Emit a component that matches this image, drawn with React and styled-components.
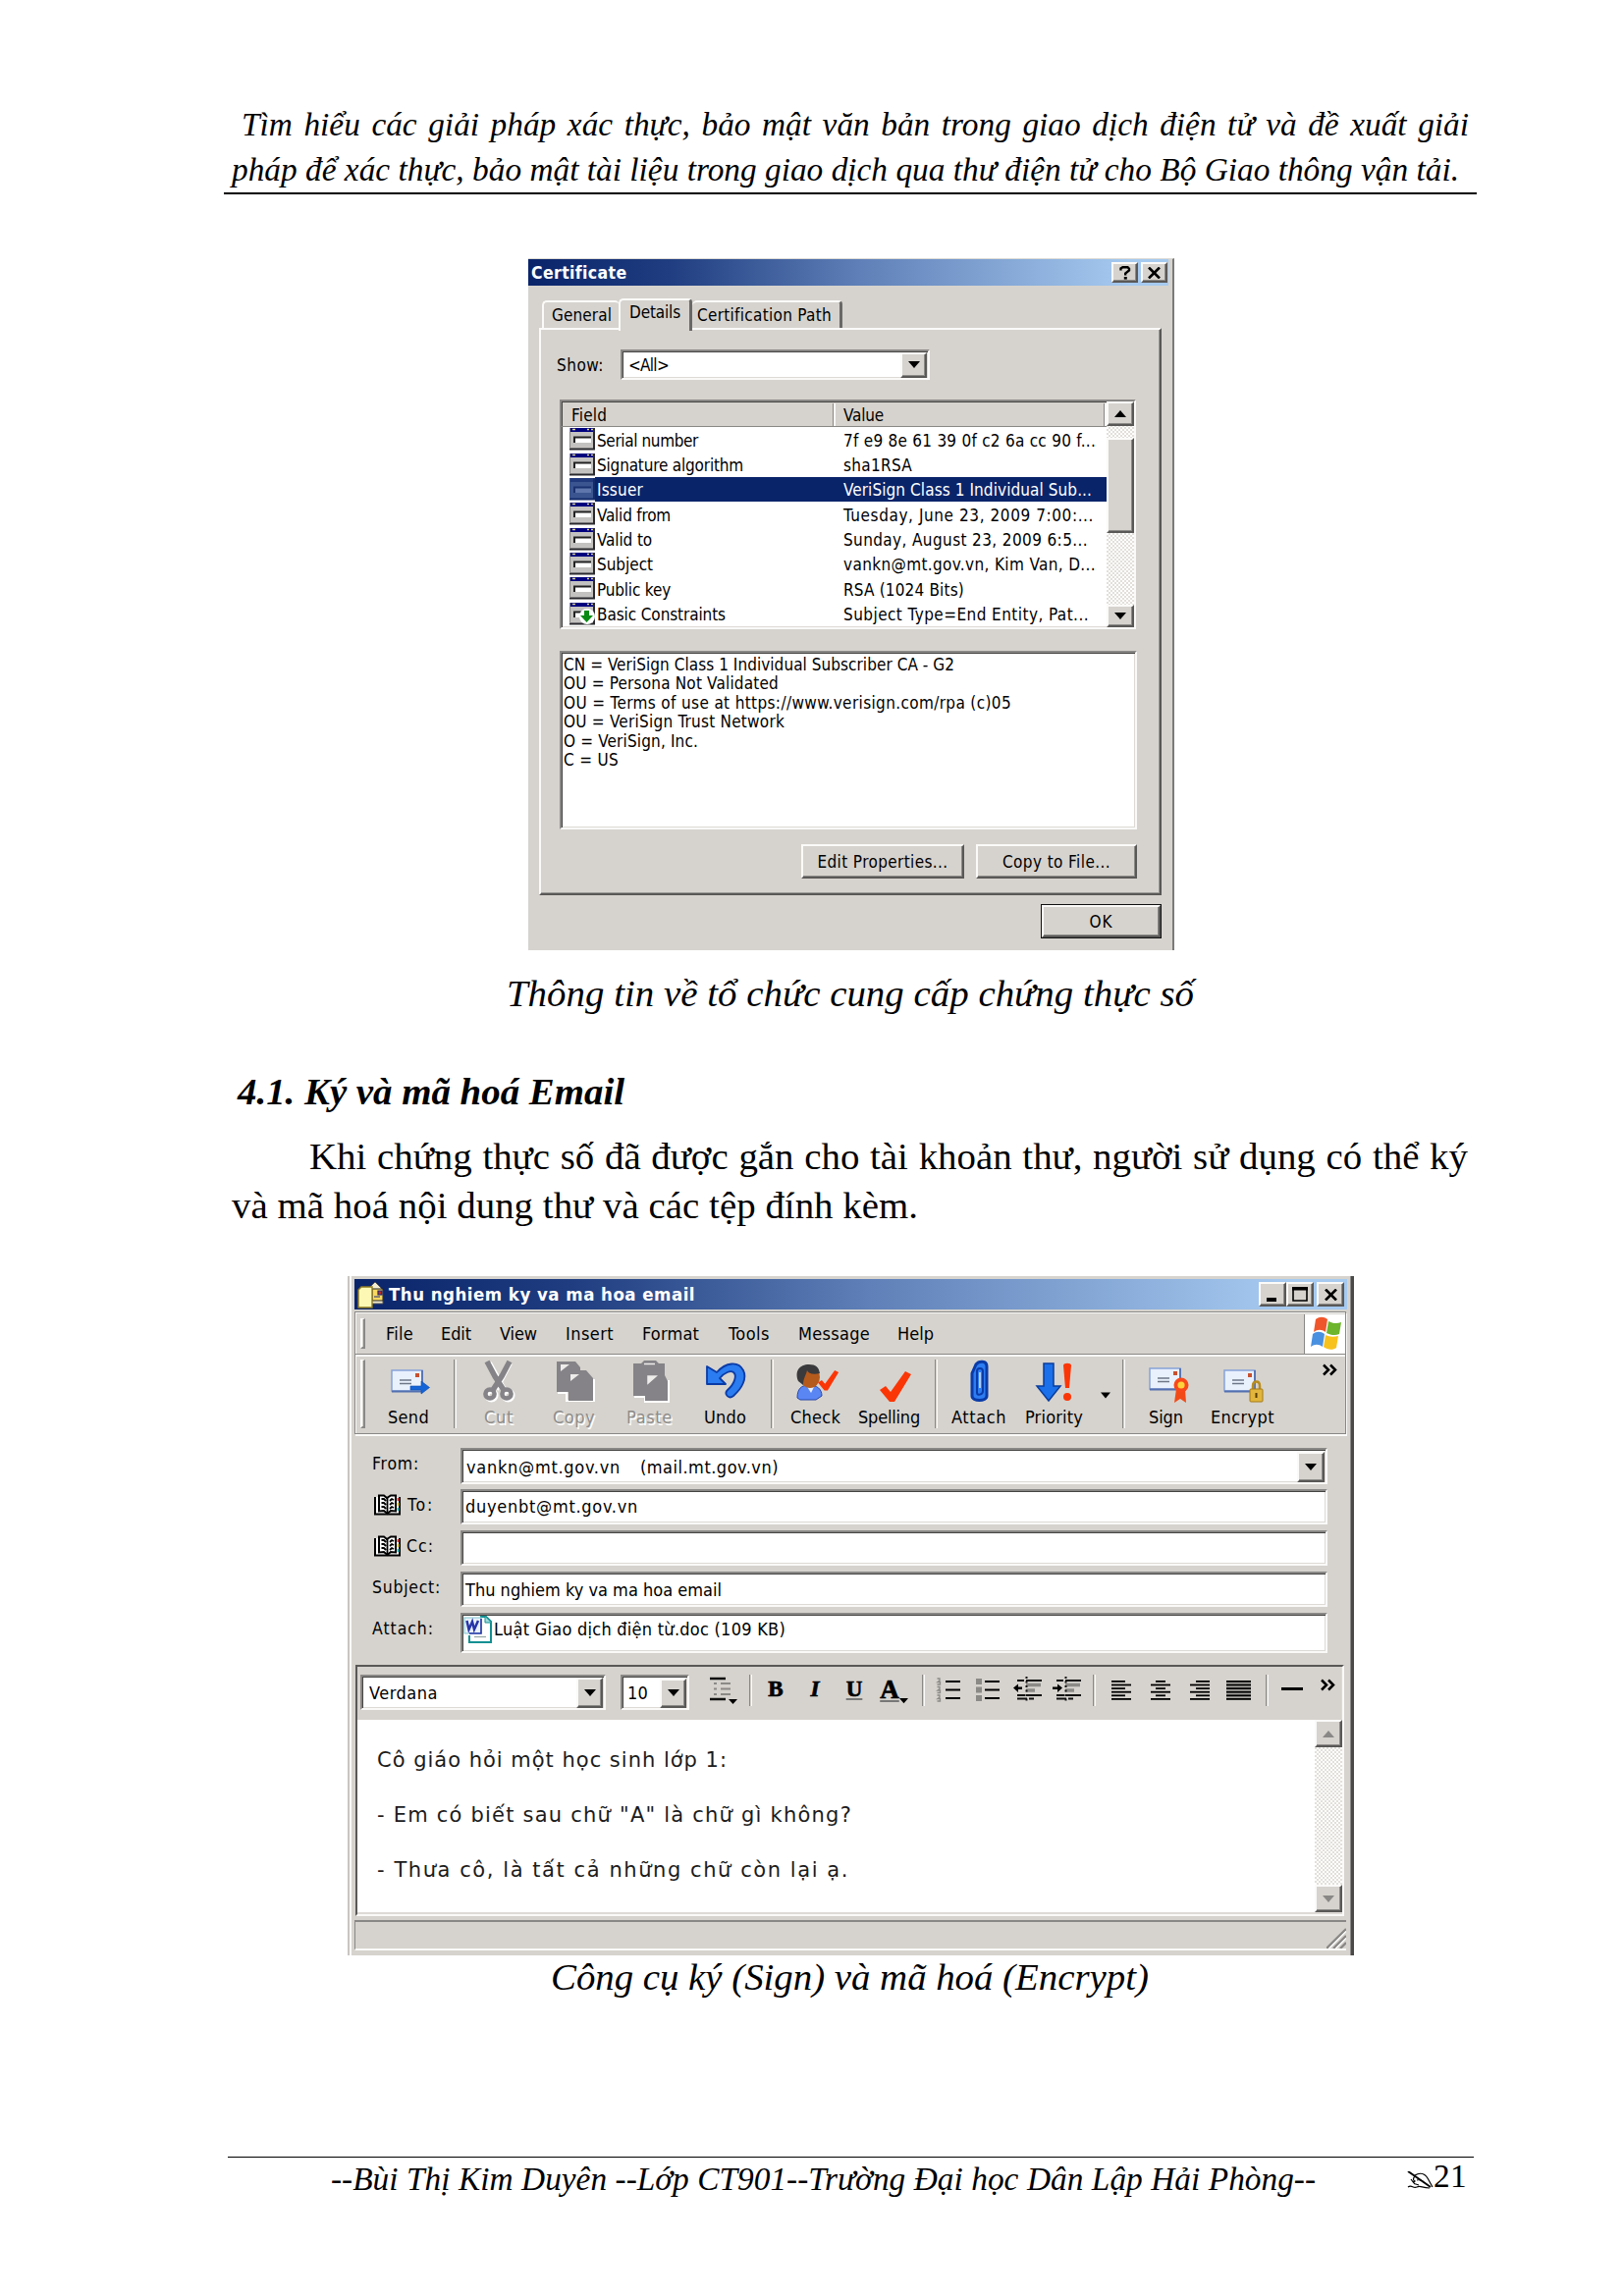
import React, { useLayoutEffect, useRef, useState } from "react";
import styled, { createGlobalStyle, css } from "styled-components";

const face = "#d6d3ce";
const ui = `"DejaVu Sans Condensed", "DejaVu Sans", sans-serif`;
const uiWide = `"DejaVu Sans", sans-serif`;
const serif = `"Liberation Serif", serif`;

const Global = createGlobalStyle`
  * { box-sizing: border-box; }
  body { margin: 0; background: #fff; }
`;

const raised = css`
  background: ${face};
  border: 2px solid;
  border-color: #fbfaf9 #5a5857 #5a5857 #fbfaf9;
  box-shadow: inset -1px -1px 0 #8c8a87;
`;
const sunken = css`
  border: 2px solid;
  border-color: #8a8886 #faf9f8 #faf9f8 #8a8886;
  box-shadow: inset 1px 1px 0 #454443, inset -1px -1px 0 #dddad6;
`;

/* Text set to an exact measure: the spacing is worked out from the natural width. */
const FitBox = styled.span`
  display: block;
  flex: none;
  width: ${(p) => p.$w}px;
  margin-left: ${(p) => p.$ml || 0}px;
  white-space: pre;
`;
function Fit({ w, ml, words, children }) {
  const ref = useRef(null);
  const [space, setSpace] = useState(0);
  useLayoutEffect(() => {
    const el = ref.current;
    const prevL = el.style.letterSpacing;
    const prevW = el.style.wordSpacing;
    el.style.letterSpacing = "0px";
    el.style.wordSpacing = "0px";
    const natural = el.getBoundingClientRect().width;
    el.style.letterSpacing = prevL;
    el.style.wordSpacing = prevW;
    const n = words ? children.split(" ").length - 1 : children.length;
    setSpace((w - natural) / n);
  }, [w, words, children]);
  return (
    <FitBox $w={w} $ml={ml}>
      <span ref={ref} style={words ? { wordSpacing: space } : { letterSpacing: space }}>
        {children}
      </span>
    </FitBox>
  );
}

/* ---------- document ---------- */
const Page = styled.div`
  width: 1654px;
  height: 2339px;
  display: flex;
  flex-direction: column;
  background: #fff;
  color: #000;
  font-family: ${serif};
  overflow: hidden;
`;
const PageHeader = styled.header`
  margin: 104px 150px 0 228px;
  border-bottom: 2px solid #000;
  font-size: 33.33px;
  line-height: 46px;
  font-style: italic;
`;
const DocLine = styled.div`
  margin-top: ${(p) => p.$mt || 0}px;
  padding-left: ${(p) => p.$x}px;
  height: ${(p) => p.$h || 46}px;
  line-height: ${(p) => p.$h || 46}px;
  font-size: 38.89px;
  font-style: ${(p) => (p.$italic ? "italic" : "normal")};
  font-weight: ${(p) => (p.$bold ? 700 : 400)};
`;
const PageFooter = styled.footer`
  display: flex;
  margin: 161px 153px 0 232px;
  border-top: 1px solid #000;
  font-size: 33.33px;
  line-height: 44px;
  height: 46px;
`;
const FooterText = styled.div`
  margin-left: 105px;
  font-style: italic;
`;
const PageNumber = styled.div`
  display: flex;
  margin-left: 93px;
  margin-top: -3px;
  svg { margin-top: 17px; }
`;

/* ---------- shared controls ---------- */
const Dialog = styled.section`
  margin: 65px 0 0 538px;
  width: 658px;
  height: 705px;
  flex: none;
  display: flex;
  flex-direction: column;
  background: ${face};
  border-top: 1px solid #dcdad6;
  border-right: 2px solid #7c7a78;
  font-family: ${ui};
  font-size: 17px;
`;
const TitleBar = styled.div`
  display: flex;
  align-items: center;
  flex: none;
  width: ${(p) => p.$w}px;
  height: ${(p) => p.$h}px;
  margin-bottom: ${(p) => p.$mb}px;
  padding: 0 ${(p) => p.$pr}px 0 3px;
  background: linear-gradient(90deg, #0a246a 0%, #1f3d80 22%, #5f80b8 52%, #a6caf0 94%);
  color: #fff;
  font-size: ${(p) => p.$size}px;
  font-weight: 700;
`;
const CaptionButton = styled.span`
  ${raised}
  display: flex;
  align-items: center;
  justify-content: center;
  width: ${(p) => p.$w || 27}px;
  height: ${(p) => p.$h || 21}px;
  margin-left: ${(p) => (p.$ml === "auto" ? "auto" : (p.$ml || 0) + "px")};
`;
const Sunken = styled.div`
  ${sunken}
  display: flex;
  align-items: ${(p) => p.$align || "center"};
  flex: none;
  width: ${(p) => p.$w}px;
  height: ${(p) => p.$h}px;
  margin: ${(p) => p.$mt || 0}px 0 0 ${(p) => p.$ml || 0}px;
  padding: ${(p) => p.$pt || 0}px 0 ${(p) => p.$pb || 0}px ${(p) => p.$pl || 0}px;
  background: #fff;
`;
const ArrowButton = styled.span`
  ${raised}
  display: flex;
  align-items: center;
  justify-content: center;
  flex: none;
  width: ${(p) => p.$w || 27}px;
  height: ${(p) => p.$h || 27}px;
  margin-top: ${(p) => (p.$bottom ? "auto" : 0)};
  margin-left: ${(p) => (p.$push ? "auto" : 0)};
  margin-right: ${(p) => (p.$push ? 1 : 0)}px;
`;
const ScrollTrack = styled.div`
  display: flex;
  flex-direction: column;
  flex: none;
  width: 28px;
  margin-left: auto;
  align-self: stretch;
  background: repeating-conic-gradient(#fff 0 25%, #e2dfda 0 50%) 0 0 / 4px 4px;
`;
const Thumb = styled.span`
  ${raised}
  height: 97px;
  margin: 12px 0 auto;
`;
const Arrow = ({ up, color = "#000", w = 12 }) => (
  <svg width={w} height="7" viewBox="0 0 12 7">
    <path d={up ? "M0 7L6 0L12 7Z" : "M0 0H12L6 7Z"} fill={color} />
  </svg>
);
const CloseGlyph = () => (
  <svg width="13" height="12" viewBox="0 0 13 12">
    <path d="M1 0.5L12 11.5M12 0.5L1 11.5" stroke="#000" strokeWidth="2.6" />
  </svg>
);

/* ---------- certificate dialog ---------- */
const Tabs = styled.div`
  display: flex;
  align-items: flex-end;
  height: 30px;
  padding-left: 14px;
`;
const Tab = styled.div`
  display: flex;
  align-items: center;
  width: ${(p) => p.$w}px;
  height: ${(p) => (p.$active ? 33 : 28)}px;
  margin-bottom: ${(p) => (p.$active ? -3 : 0)}px;
  padding: 0 0 ${(p) => (p.$active ? 8 : 0)}px ${(p) => p.$pl}px;
  position: relative;
  z-index: ${(p) => (p.$active ? 1 : 0)};
  background: ${face};
  border-top: 2px solid #fbfaf9;
  border-left: ${(p) => (p.$noLeft ? 0 : 2)}px solid #fbfaf9;
  border-right: ${(p) => (p.$edge ? "3px solid #6a6866" : "0")};
  border-radius: 5px 4px 0 0;
`;
const TabPanel = styled.div`
  width: 634px;
  height: 578px;
  flex: none;
  margin-left: 11px;
  border: 2px solid;
  border-color: #fbfaf9 #5a5857 #5a5857 #fbfaf9;
  box-shadow: inset -1px -1px 0 #9a9895;
`;
const ShowRow = styled.div`
  display: flex;
  align-items: center;
  margin-top: 20px;
  padding-left: 16px;
  height: 31px;
`;
const Columns = styled.div`
  width: 555px;
  height: 230px;
  overflow: hidden;
`;
const ColumnHeads = styled.div`
  display: flex;
  height: 26px;
  padding: 4px 0 0 10px;
  line-height: 21px;
  background: ${face};
  border-bottom: 1px solid #8a8886;
  box-shadow: inset 0 1px 0 #454443, inset 1px 0 0 #454443;
`;
const HeadCell = styled.div`
  width: ${(p) => p.$w}px;
  padding-left: ${(p) => p.$pl || 0}px;
  margin-top: -2px;
  padding-top: 2px;
  border-right: 1px solid #8a8886;
  box-shadow: 2px 0 0 #fbfaf9;
`;
const Row = styled.div`
  display: flex;
  align-items: center;
  height: 25.35px;
  padding-left: 8px;
  svg { flex: none; }
`;
const RowBody = styled.div`
  display: flex;
  align-items: center;
  width: 521px;
  height: 25.35px;
  padding: 2px 0 0 2px;
  color: ${(p) => (p.$on ? "#fff" : "#000")};
  background: ${(p) => (p.$on ? "#0a246a" : "transparent")};
`;
const RowName = styled.div`
  width: 251px;
`;
const Details = styled.div`
  line-height: 19.45px;
`;
const ButtonRow = styled.div`
  display: flex;
  margin: ${(p) => p.$mt}px 0 0 ${(p) => p.$ml}px;
  gap: 12px;
`;
const Button = styled.div`
  ${raised}
  display: flex;
  align-items: center;
  justify-content: center;
  width: ${(p) => p.$w}px;
  height: 35px;
  ${(p) => p.$primary && css`outline: 1.5px solid #111; outline-offset: -1.5px; border-width: 3px; `}
`;

const FieldIcon = ({ on, ext }) => (
  <svg width="26" height="23" viewBox="0 0 26 23">
    <rect x="0" y="0" width="26" height="22" fill={on ? "#3a5590" : "#c4c2c0"} />
    <rect x="0" y="0" width="26" height="4" fill={on ? "#20397c" : "#00007e"} />
    {!on && <path d="M3 1.5h3M18 1.5h2M22 1.5h2" stroke="#d8d490" strokeWidth="1.5" />}
    <path d="M25 0V21.5H0" fill="none" stroke={on ? "#152c6a" : "#2a2a2e"} strokeWidth="2" />
    <path d="M0.5 0V21" stroke={on ? "#3a5590" : "#8a8886"} />
    <rect x="5" y="10" width="17" height="5" fill={on ? "#5e76ab" : "#fff"} />
    <path d="M5 15V9.5H22" fill="none" stroke={on ? "#1b3270" : "#222"} strokeWidth="2" />
    {ext && (
      <g>
        <circle cx="18" cy="14" r="8" fill="#fff" />
        <path d="M15 8h5v5h4l-6.500 7l-6.500-7h4z" fill="#0a8a14" />
      </g>
    )}
  </svg>
);

const rows = [
  ["Serial number", 103, "7f e9 8e 61 39 0f c2 6a cc 90 f...", 257],
  ["Signature algorithm", 149, "sha1RSA", 70],
  ["Issuer", 47, "VeriSign Class 1 Individual Sub...", 253],
  ["Valid from", 75, "Tuesday, June 23, 2009 7:00:...", 255],
  ["Valid to", 56, "Sunday, August 23, 2009 6:5...", 249],
  ["Subject", 57, "vankn@mt.gov.vn, Kim Van, D...", 257],
  ["Public key", 75, "RSA (1024 Bits)", 123],
  ["Basic Constraints", 131, "Subject Type=End Entity, Pat...", 250],
];
const details = [
  ["CN = VeriSign Class 1 Individual Subscriber CA - G2", 398],
  ["OU = Persona Not Validated", 219],
  ["OU = Terms of use at https://www.verisign.com/rpa (c)05", 456],
  ["OU = VeriSign Trust Network", 225],
  ["O = VeriSign, Inc.", 137],
  ["C = US", 56],
];

function CertificateDialog() {
  return (
    <Dialog>
      <TitleBar $w={652} $h={27} $mb={13} $pr={1} $size={17.5}>
        <Fit w={97}>Certificate</Fit>
        <CaptionButton $ml="auto">
          <svg width="12" height="14" viewBox="0 0 12 14">
            <path d="M1.500 4.500V2.500L3.500 1.200H8.500L10 2.800V4.500L6.200 7.500V9.500" fill="none" stroke="#000" strokeWidth="2.400" />
            <rect x="4.800" y="11" width="3" height="2.600" />
          </svg>
        </CaptionButton>
        <CaptionButton $ml={3}><CloseGlyph /></CaptionButton>
      </TitleBar>
      <Tabs>
        <Tab $w={78} $pl={8}><Fit w={61}>General</Fit></Tab>
        <Tab $w={75} $pl={9} $active $edge><Fit w={52}>Details</Fit></Tab>
        <Tab $w={153} $pl={5} $edge $noLeft><Fit w={137}>Certification Path</Fit></Tab>
      </Tabs>
      <TabPanel>
        <ShowRow>
          <Fit w={48}>Show:</Fit>
          <Sunken $w={315} $h={31} $ml={17} $pl={6}>
            <Fit w={41}>{"<All>"}</Fit>
            <ArrowButton $push $h={26}><Arrow /></ArrowButton>
          </Sunken>
        </ShowRow>
        <Sunken $w={587} $h={234} $ml={19} $mt={20} $align="stretch">
          <Columns>
            <ColumnHeads>
              <HeadCell $w={267}><Fit w={36}>Field</Fit></HeadCell>
              <HeadCell $w={276} $pl={10}><Fit w={41}>Value</Fit></HeadCell>
            </ColumnHeads>
            {rows.map(([name, nw, value, vw], i) => (
              <Row key={name}>
                <FieldIcon on={i === 2} ext={i === 7} />
                <RowBody $on={i === 2}>
                  <RowName><Fit w={nw}>{name}</Fit></RowName>
                  <Fit w={vw}>{value}</Fit>
                </RowBody>
              </Row>
            ))}
          </Columns>
          <ScrollTrack>
            <ArrowButton $w={28} $h={25}><Arrow up /></ArrowButton>
            <Thumb />
            <ArrowButton $w={28} $h={23}><Arrow /></ArrowButton>
          </ScrollTrack>
        </Sunken>
        <Sunken $w={588} $h={182} $ml={19} $mt={22} $pl={2} $pt={3} $align="flex-start">
          <Details>
            {details.map(([t, w]) => <Fit key={t} w={w}>{t}</Fit>)}
          </Details>
        </Sunken>
        <ButtonRow $mt={15} $ml={265}>
          <Button $w={166}><Fit w={133}>Edit Properties...</Fit></Button>
          <Button $w={164}><Fit w={110}>Copy to File...</Fit></Button>
        </ButtonRow>
      </TabPanel>
      <ButtonRow $mt={9} $ml={522}>
        <Button $w={123} $primary><Fit w={24}>OK</Fit></Button>
      </ButtonRow>
    </Dialog>
  );
}

/* ---------- mail window ---------- */
const Window = styled.section`
  margin: 47px 0 0 354px;
  width: 1025px;
  height: 692px;
  flex: none;
  display: flex;
  flex-direction: column;
  padding: 3px 4px 0 7px;
  background: ${face};
  border-right: 3px solid #4a4948;
  box-shadow: inset 2px 0 0 #c9c6c2, inset 4px 0 0 #fbfaf9, inset -1px 0 0 #8a8886;
  font-family: ${ui};
  font-size: 18px;
`;
const Bars = styled.div`
  width: 1010px;
  height: 125px;
  flex: none;
  border: 1px solid #8a8886;
  box-shadow: inset 1px 1px 0 #fbfaf9, 1px 2px 0 #fbfaf9;
`;
const MenuBar = styled.nav`
  display: flex;
  align-items: center;
  height: 43px;
  padding: 1px 0 0 5px;
  border-bottom: 1px solid #8a8886;
  box-shadow: 0 2px 0 #fbfaf9;
`;
const LogoBox = styled.div`
  display: flex;
  align-items: center;
  justify-content: center;
  width: 42px;
  height: 40px;
  margin-left: auto;
  background: #fff;
  border-left: 1px solid #8a8886;
`;
const Grip = styled.span`
  width: 5px;
  height: ${(p) => p.$h}px;
  border: solid;
  border-width: 1px 2px 2px 2px;
  border-color: #fbfaf9 #8a8886 #8a8886 #fbfaf9;
`;
const ToolBar = styled.div`
  display: flex;
  height: 80px;
  padding: 5px 0 0 5px;
`;
const Tool = styled.div`
  display: flex;
  flex-direction: column;
  align-items: center;
  flex: none;
  width: ${(p) => p.$w}px;
  margin-left: ${(p) => p.$ml}px;
  color: ${(p) => (p.$off ? "#8f8d8a" : "#000")};
  text-shadow: ${(p) => (p.$off ? "1.5px 1.5px 0 #fff" : "none")};
  line-height: 24px;
  svg { flex: none; overflow: visible; margin-bottom: 1px; }
`;
const Sep = styled.span`
  flex: none;
  width: 3px;
  height: ${(p) => p.$h || 70}px;
  margin: ${(p) => p.$mt || 0}px 0 0 ${(p) => p.$ml}px;
  border-left: 1.500px solid #8a8886;
  border-right: 1.500px solid #fbfaf9;
`;
const Spot = styled.span`
  display: flex;
  flex: none;
  width: ${(p) => p.$w}px;
  margin: ${(p) => p.$mt || 0}px 0 0 ${(p) => p.$ml}px;
  svg { overflow: visible; }
`;
const Fields = styled.div`
  display: flex;
  flex-direction: column;
  gap: 6px;
  padding-top: 14px;
`;
const FieldRow = styled.div`
  display: flex;
  align-items: flex-start;
  height: ${(p) => p.$h}px;
`;
const FieldLabel = styled.div`
  display: flex;
  align-items: center;
  flex: none;
  width: 108px;
  height: 31px;
  padding-left: ${(p) => (p.$book ? 20 : 18)}px;
  font-size: 17.5px;
`;
const Editor = styled.div`
  width: 1007px;
  height: 256px;
  flex: none;
  margin: 12px 0 0 1px;
  border: 2px solid;
  border-color: #5a5857 #faf9f8 #faf9f8 #5a5857;
  box-shadow: inset -1px -1px 0 #dddad6;
`;
const FormatBar = styled.div`
  display: flex;
  align-items: center;
  height: 54px;
  padding: 0 0 2px 3px;
`;
const Body = styled.div`
  display: flex;
  height: 197px;
  background: #fff;
  border-bottom: 1px solid #dddad6;
`;
const Message = styled.div`
  padding: 13px 0 0 20px;
  font-family: ${uiWide};
  font-size: 21px;
  line-height: 56px;
  color: #1c1c1c;
`;
const StatusBar = styled.div`
  display: flex;
  justify-content: flex-end;
  align-items: flex-end;
  width: 1010px;
  height: 31px;
  flex: none;
  margin-top: 4px;
  border: solid;
  border-width: 2px 0 2px 1px;
  border-color: #8a8886 #fbfaf9 #fbfaf9 #8a8886;
`;

const Icon = ({ children }) => <svg width="44" height="46" viewBox="0 0 44 46">{children}</svg>;

const Envelope = ({ x, y }) => (
  <g transform={`translate(${x} ${y})`}>
    <rect x="1" y="1" width="31" height="21" fill="#e9f1fd" stroke="#86a3d8" strokeWidth="1.500" />
    <path d="M1 22.500H32V1" fill="none" stroke="#5470b0" strokeWidth="1.800" />
    <path d="M9 11h12M9 14.500h12" stroke="#6d7787" strokeWidth="1.600" />
    <rect x="25" y="4" width="4" height="4" fill="#c8502f" />
  </g>
);
const Check = ({ t }) => (
  <path transform={t} d="M0 19L6 15L11 21L26 0L32 3L15 31L10 31Z" fill="#fb3606" />
);
const icons = {
  Send: (
    <Icon>
      <Envelope x={4} y={10} />
      <path d="M24 27h11v-5l8.500 6.500l-8.500 6.500v-4h-11z" fill="#1464d8" stroke="#0b4aa8" strokeWidth="0.600" />
    </Icon>
  ),
  Cut: (
    <Icon>
      <g fill="none" stroke="#fff" strokeWidth="5" transform="translate(1.500 1.500)"><path d="M11 2L26 29M32 2L18 29" /><circle cx="13" cy="35" r="4.500" /><circle cx="30" cy="35" r="4.500" /></g>
      <g fill="none" stroke="#858387" strokeWidth="5.500"><path d="M10 2L18 17L27 31M33 2L25 17L16 31" /><circle cx="13" cy="35" r="4.600" strokeWidth="4.500" /><circle cx="30" cy="35" r="4.600" strokeWidth="4.500" /></g>
    </Icon>
  ),
  Copy: (
    <Icon>
      <path d="M5 33h9v8h28v-22" fill="none" stroke="#fff" strokeWidth="2" transform="translate(0 1)" />
      <path d="M4 2h19l5 6v3h6l7 8v23h-25v-9h-12z" fill="#858387" />
      <path d="M8 5h9l-9 7zM18 15h9l-9 7z" fill="#eeecea" />
    </Icon>
  ),
  Paste: (
    <Icon>
      <path d="M6 38h11v5h24v-22" fill="none" stroke="#fff" strokeWidth="2" />
      <path d="M5 4h8l3-3h12l3 3h6v12l3 6v20h-23v-5h-12z" fill="#858387" />
      <path d="M16 4.500h11M20 17h8l-8 7z" fill="#eeecea" stroke="#eeecea" strokeWidth="1.500" />
    </Icon>
  ),
  Undo: (
    <Icon>
      <path d="M3 7v18h19l-6-6c5-6 11-8 14-6c4 3 1 12-6 18c-4 4 1 10 6 6c9-8 14-18 10-26c-5-10-18-8-27 2z" fill="#2a7cf0" stroke="#0b3ba6" strokeWidth="1.800" strokeLinejoin="round" />
    </Icon>
  ),
  Check: (
    <Icon>
      <path d="M3 39c0-9 4-13 12-13s13 4 13 11l-6 4h-16z" fill="#5a86f4" stroke="#2746a8" />
      <path d="M12 26l5 8l4-8z" fill="#e8eefc" />
      <ellipse cx="16" cy="18" rx="10" ry="11" fill="#b45a1c" />
      <path d="M4 22c-4-10 1-17 11-17c7 0 10 3 11 9c-7 2-12 0-13-3c-1 5-4 8-4 15z" fill="#3a3a3c" />
      <Check t="translate(24 11) scale(.66)" />
    </Icon>
  ),
  Spelling: <Icon><Check t="translate(12 12)" /></Icon>,
  Attach: (
    <Icon>
      <path d="M15 14L19 5C22 1 30 1 30 7V37C30 43 15 43 15 37Z" fill="#2d7cf2" stroke="#0a3ba8" strokeWidth="3" />
      <path d="M20 34V12c0-4 6-4 6 0v20c0 4-6 5-6 2" fill="none" stroke="#0a3ba8" strokeWidth="2" />
      <path d="M23 13v16" stroke="#d9e7fb" strokeWidth="1.500" />
    </Icon>
  ),
  Priority: (
    <Icon>
      <path d="M11 4h10v23h7l-12 15l-12-15h7z" fill="#1a70ea" stroke="#0a3d9c" strokeWidth="1.500" />
      <path d="M31 6c0-3 8-3 8 0l-2 23h-4z" fill="#fb3606" />
      <circle cx="35" cy="38" r="4" fill="#fb3606" />
    </Icon>
  ),
  Sign: (
    <Icon>
      <Envelope x={4} y={8} />
      <path d="M32 30l-2 14l6-4l6 4l-1-14z" fill="#f24a16" />
      <circle cx="37" cy="26" r="7.500" fill="#f8481a" />
      <circle cx="37" cy="26" r="3.600" fill="#ffd23c" />
    </Icon>
  ),
  Encrypt: (
    <Icon>
      <Envelope x={2} y={10} />
      <path d="M32 32v-5c0-6 7-6 7 0v5" fill="none" stroke="#b98c1c" strokeWidth="2.500" />
      <rect x="29" y="30" width="13" height="13" rx="1" fill="#e2b53c" stroke="#a67a14" />
      <path d="M35.500 34v5" stroke="#5a3d00" strokeWidth="2" />
    </Icon>
  ),
};

const Chevrons = () => (
  <svg width="15" height="11" viewBox="0 0 15 11">
    <path d="M1 0.500L6 5.500L1 10.500M8 0.500L13 5.500L8 10.500" fill="none" stroke="#000" strokeWidth="2.500" />
  </svg>
);
const Book = () => (
  <svg width="27" height="22" viewBox="0 0 27 22">
    <path d="M1 3V20.500H26V3" fill="#fff" stroke="#000" strokeWidth="2" />
    <path d="M5 17.500V1.500H10L13 4L17 1.500H22V17.500L17 17L13.500 20L10 17Z" fill="#fff" stroke="#000" strokeWidth="2" />
    <path d="M13.500 4V19M7.500 5h2.500l2 2M7.500 9h2.500l2 2M7.500 13h2.500l2 2M20 6l-2-1l-2 2M20 10l-2-1l-2 2M20 14l-2-1l-2 2" stroke="#000" strokeWidth="1.800" fill="none" />
    <path d="M24.500 4v3" stroke="#d33" strokeWidth="2" /><path d="M24.500 9v3" stroke="#dc3" strokeWidth="2" /><path d="M24.500 14v3" stroke="#2bb" strokeWidth="2" />
  </svg>
);
const WordDoc = () => (
  <svg width="29" height="28" viewBox="0 0 29 28">
    <path d="M6 1H23L28 6V27H6Z" fill="#fff" />
    <path d="M6 20V27H28V6L23 1H17" fill="none" stroke="#128f92" strokeWidth="2" />
    <path d="M22 1v6h6" fill="#9fdcdc" stroke="#128f92" />
    <path d="M11 21.500h12" stroke="#9aa" strokeWidth="1.300" />
    <rect x="1" y="2" width="17" height="16" fill="#eaf2fc" stroke="#7fc3cc" />
    <path d="M18 3v15H6" stroke="#2635a8" strokeWidth="1.600" fill="none" />
    <path d="M3.500 5l2 9l3.500-8l2 8l4-9" fill="none" stroke="#2635a8" strokeWidth="2.500" />
  </svg>
);
const NewMail = () => (
  <svg width="28" height="28" viewBox="0 0 28 28">
    <path d="M10 9L18 1L26 9V23H12Z" fill="#f4edd0" stroke="#555" />
    <rect x="15" y="8" width="11" height="12" fill="#f8d860" stroke="#222" />
    <path d="M21 10h4v4h-4zM17 16h6" fill="#c22a1a" stroke="#1b2a80" strokeWidth="1.200" />
    <path d="M1 9l3-3h11v21H1z" fill="#fdf9b4" stroke="#8d7a20" strokeWidth="1.400" />
  </svg>
);
const WindowsFlag = () => (
  <svg width="34" height="36" viewBox="0 0 34 36">
    <path d="M7 3c4-3 8-3 12 0l-2 13c-4-3-8-3-12 0z" fill="#f0562b" />
    <path d="M20 5c4 2 8 3 13 1l-2 12c-4 2-9 1-13-1z" fill="#6db52c" />
    <path d="M4 18c4-3 8-3 12 0l-2 13c-4-3-8-3-12 0z" fill="#4a90e0" />
    <path d="M17 19c4 2 8 2 13 1l-2 12c-4 3-9 2-13-1z" fill="#f8c21c" />
  </svg>
);

const Letter = styled.span`
  flex: none;
  width: ${(p) => p.$w}px;
  height: 26px;
  margin: ${(p) => p.$mt || 0}px 0 0 ${(p) => p.$ml}px;
  text-align: center;
  font: ${(p) => (p.$italic ? "italic" : "normal")} 700 ${(p) => p.$size || 23}px/26px ${serif};
  text-decoration: ${(p) => (p.$under ? "underline #777 2px" : "none")};
  text-underline-offset: 2px;
  -webkit-text-stroke: 0.700px #000;
`;
const alignWidths = { left: [14, 20], center: [10, 20], right: [14, 20], full: [25, 25] };
const AlignGlyph = ({ kind }) => {
  const w = kind === "full" ? 25 : 20;
  return (
    <svg width={w} height="24" viewBox={`0 0 ${w} 24`}>
      {kind === "full" && <rect y="2" width={w} height="19" fill="#a5a3a0" />}
      {[0, 1, 2, 3, 4, 5].map((i) => {
        const len = alignWidths[kind][i % 2];
        const x = kind === "right" ? w - len : kind === "center" ? (w - len) / 2 : 0;
        return <rect key={i} x={x} y={2 + i * 3.6} width={len} height="1.8" />;
      })}
    </svg>
  );
};
const ListGlyph = ({ numbered }) => (
  <svg width="25" height="27" viewBox="0 0 25 27">
    {[4, 12.5, 21].map((y) => (
      <g key={y}>
        <rect x="10" y={y} width="15" height="2" />
        {numbered ? (
          <path d={`M1.500 ${y - 2}h2.500v2l-2 1.500h2.500v2.500h-3`} fill="none" stroke="#8c8a87" strokeWidth="1.300" />
        ) : (
          <rect x="1" y={y - 2} width="6" height="6" fill="#8c8a87" />
        )}
      </g>
    ))}
  </svg>
);
const IndentGlyph = ({ out }) => (
  <svg width="29" height="27" viewBox="0 0 29 27">
    <path d="M4 4h7M13 4h16M4 19h8M13 19h16M4 22.500h10M16 22.500h5" stroke="#111" strokeWidth="2" />
    <path d="M13 8.500h15M13 14h9" stroke="#8c8a87" strokeWidth="3.400" />
    <path d="M13.500 0v27" stroke="#111" strokeWidth="2" strokeDasharray="2 2.500" />
    <path d={out ? "M0 11.500l5-4v3h4v2.500h-4v3z" : "M10 11.500l-5-4v3h-5v2.500h5v3z"} />
  </svg>
);

const menus = [["File", 21, 28], ["Edit", 28, 31], ["View", 29, 38], ["Insert", 29, 49], ["Format", 29, 58], ["Tools", 30, 42], ["Message", 29, 73], ["Help", 28, 37]];

const ToolItem = ({ name, ml, w, off }) => (
  <Tool $ml={ml} $w={w} $off={off}>
    {icons[name]}
    <Fit w={w}>{name}</Fit>
  </Tool>
);

function MailWindow() {
  return (
    <Window>
      <TitleBar $w={1011} $h={31} $mb={2} $pr={3} $size={18.5}>
        <NewMail />
        <Fit w={312} ml={4}>Thu nghiem ky va ma hoa email</Fit>
        <CaptionButton $ml="auto" $w={28} $h={25}>
          <svg width="14" height="14"><rect x="1" y="10" width="10" height="4" /></svg>
        </CaptionButton>
        <CaptionButton $w={28} $h={25}>
          <svg width="16" height="15"><path d="M1 1V14H15V1" fill="none" stroke="#000" strokeWidth="1.600" /><rect width="16" height="3.500" /></svg>
        </CaptionButton>
        <CaptionButton $ml={3} $w={28} $h={25}><CloseGlyph /></CaptionButton>
      </TitleBar>
      <Bars>
        <MenuBar>
          <Grip $h={31} />
          {menus.map(([t, ml, w]) => <Fit key={t} ml={ml} w={w}>{t}</Fit>)}
          <LogoBox><WindowsFlag /></LogoBox>
        </MenuBar>
        <ToolBar>
          <Grip $h={70} />
          <ToolItem name="Send" ml={23} w={42} />
          <Sep $ml={25} />
          <ToolItem name="Cut" ml={28} w={30} off />
          <ToolItem name="Copy" ml={40} w={43} off />
          <ToolItem name="Paste" ml={32} w={47} off />
          <ToolItem name="Undo" ml={32} w={43} />
          <Sep $ml={25} />
          <ToolItem name="Check" ml={17} w={51} />
          <ToolItem name="Spelling" ml={18} w={63} />
          <Sep $ml={15} />
          <ToolItem name="Attach" ml={14} w={56} />
          <ToolItem name="Priority" ml={19} w={59} />
          <Spot $w={10} $ml={18} $mt={33}><Arrow w={10} /></Spot>
          <Sep $ml={12} />
          <ToolItem name="Sign" ml={24} w={35} />
          <ToolItem name="Encrypt" ml={28} w={65} />
          <Spot $w={15} $ml={49} $mt={5}><Chevrons /></Spot>
        </ToolBar>
      </Bars>
      <Fields>
        <FieldRow $h={36}>
          <FieldLabel><Fit w={48}>From:</Fit></FieldLabel>
          <Sunken $w={883} $h={37} $pl={4} $pt={1}>
            <Fit w={157}>vankn@mt.gov.vn</Fit>
            <Fit w={141} ml={20}>(mail.mt.gov.vn)</Fit>
            <ArrowButton $push $w={28} $h={31}><Arrow /></ArrowButton>
          </Sunken>
        </FieldRow>
        <FieldRow $h={36}>
          <FieldLabel $book><Book /><Fit ml={7} w={27}>To:</Fit></FieldLabel>
          <Sunken $w={883} $h={36} $pl={3} $pb={1}><Fit w={176}>duyenbt@mt.gov.vn</Fit></Sunken>
        </FieldRow>
        <FieldRow $h={36}>
          <FieldLabel $book><Book /><Fit ml={6} w={28}>Cc:</Fit></FieldLabel>
          <Sunken $w={883} $h={36} />
        </FieldRow>
        <FieldRow $h={36}>
          <FieldLabel><Fit w={70}>Subject:</Fit></FieldLabel>
          <Sunken $w={883} $h={36} $pl={3}><Fit w={261}>Thu nghiem ky va ma hoa email</Fit></Sunken>
        </FieldRow>
        <FieldRow $h={41}>
          <FieldLabel><Fit w={63}>Attach:</Fit></FieldLabel>
          <Sunken $w={883} $h={41} $pl={1} $pb={8}><WordDoc /><Fit ml={2} w={297}>Luật Giao dịch điện từ.doc (109 KB)</Fit></Sunken>
        </FieldRow>
      </Fields>
      <Editor>
        <FormatBar>
          <Sunken $w={250} $h={36} $pl={7}><Fit w={70}>Verdana</Fit><ArrowButton $push $h={31}><Arrow /></ArrowButton></Sunken>
          <Sunken $w={70} $h={36} $ml={15} $pl={5} $pt={1}><Fit w={21}>10</Fit><ArrowButton $push $h={30}><Arrow /></ArrowButton></Sunken>
          <Spot $w={30} $ml={20} $mt={-4}>
            <svg width="30" height="28" viewBox="0 0 30 28">
              <path d="M1 2h16M1 23h16" stroke="#111" strokeWidth="2.400" />
              <path d="M12 7h10M12 12.500h10M12 18h10M5 7h3M5 12.500h3M5 18h3" stroke="#8c8a87" strokeWidth="2.200" />
              <path d="M20 23h9l-4.500 5z" />
            </svg>
          </Spot>
          <Sep $h={32} $ml={11} $mt={-5} />
          <Letter $w={18} $ml={15} $mt={-7}>B</Letter>
          <Letter $w={18} $ml={22} $mt={-7} $italic>I</Letter>
          <Letter $w={18} $ml={22} $mt={-7} $under>U</Letter>
          <Letter $w={20} $ml={17} $mt={-7} $size={27} $under>A</Letter>
          <Spot $w={10} $mt={16} $ml={0}><Arrow w={9} /></Spot>
          <Sep $h={32} $ml={13} $mt={-5} />
          <Spot $w={25} $ml={11} $mt={-6}><ListGlyph numbered /></Spot>
          <Spot $w={25} $ml={15} $mt={-6}><ListGlyph /></Spot>
          <Spot $w={29} $ml={14} $mt={-6}><IndentGlyph out /></Spot>
          <Spot $w={29} $ml={11} $mt={-6}><IndentGlyph /></Spot>
          <Sep $h={32} $ml={12} $mt={-5} />
          <Spot $w={20} $ml={16} $mt={-5}><AlignGlyph kind="left" /></Spot>
          <Spot $w={20} $ml={20} $mt={-5}><AlignGlyph kind="center" /></Spot>
          <Spot $w={20} $ml={20} $mt={-5}><AlignGlyph kind="right" /></Spot>
          <Spot $w={25} $ml={17} $mt={-5}><AlignGlyph kind="full" /></Spot>
          <Sep $h={32} $ml={15} $mt={-5} />
          <Spot $w={22} $ml={13} $mt={-7}><svg width="22" height="3"><rect width="22" height="3" /></svg></Spot>
          <Spot $w={15} $ml={18} $mt={-15}><Chevrons /></Spot>
        </FormatBar>
        <Body>
          <Message>
            <Fit w={357}>Cô giáo hỏi một học sinh lớp 1:</Fit>
            <Fit w={484}>- Em có biết sau chữ "A" là chữ gì không?</Fit>
            <Fit w={481}>- Thưa cô, là tất cả những chữ còn lại ạ.</Fit>
          </Message>
          <ScrollTrack>
            <ArrowButton $w={28} $h={28}><Arrow up color="#8a8886" /></ArrowButton>
            <ArrowButton $w={28} $h={28} $bottom><Arrow color="#8a8886" /></ArrowButton>
          </ScrollTrack>
        </Body>
      </Editor>
      <StatusBar>
        <svg width="20" height="21" viewBox="0 0 20 21">
          <path d="M0 21L20 1M7 21L20 8M14 21L20 15" stroke="#8a8886" strokeWidth="2.400" />
          <path d="M2.500 21L20 3.500M9.500 21L20 10.500" stroke="#fff" strokeWidth="1.200" />
        </svg>
      </StatusBar>
    </Window>
  );
}

export default function App() {
  return (
    <>
      <Global />
      <Page>
        <PageHeader>
          <Fit w={1250} ml={18} words>Tìm hiểu các giải pháp xác thực, bảo mật văn bản trong giao dịch điện tử và đề xuất giải</Fit>
          <Fit w={1250} ml={8} words>pháp để xác thực, bảo mật tài liệu trong giao dịch qua thư điện tử cho Bộ Giao thông vận tải.</Fit>
        </PageHeader>
        <CertificateDialog />
        <DocLine $mt={21} $x={516} $italic><Fit w={700} words>Thông tin về tổ chức cung cấp chứng thực số</Fit></DocLine>
        <DocLine $mt={54} $x={242} $italic $bold><Fit w={394} words>4.1. Ký và mã hoá Email</Fit></DocLine>
        <DocLine $mt={18} $x={315} $h={50}><Fit w={1180} words>Khi chứng thực số đã được gắn cho tài khoản thư, người sử dụng có thể ký</Fit></DocLine>
        <DocLine $x={236} $h={50}><Fit w={699} words>và mã hoá nội dung thư và các tệp đính kèm.</Fit></DocLine>
        <MailWindow />
        <DocLine $x={561} $h={44} $italic><Fit w={609} words>Công cụ ký (Sign) và mã hoá (Encrypt)</Fit></DocLine>
        <PageFooter>
          <FooterText><Fit w={1003} words>--Bùi Thị Kim Duyên --Lớp CT901--Trường Đại học Dân Lập Hải Phòng--</Fit></FooterText>
          <PageNumber>
            <svg width="27" height="19" viewBox="0 0 27 19">
              <path d="M1 0L24 16" stroke="#000" strokeWidth="2" />
              <path d="M8 4c5-3 10-2 13 3l5 9M8 5c-2 2-2 4 0 5c-2 1-1 3 1 3l3 1M4 8l3 4M1 16c4-3 5 2 9 0s5 1 13 1" fill="none" stroke="#000" strokeWidth="1.200" />
              <path d="M10 9c4-1 7 1 9 4" fill="none" stroke="#000" strokeWidth="1" />
            </svg>
            <Fit w={34}>21</Fit>
          </PageNumber>
        </PageFooter>
      </Page>
    </>
  );
}
